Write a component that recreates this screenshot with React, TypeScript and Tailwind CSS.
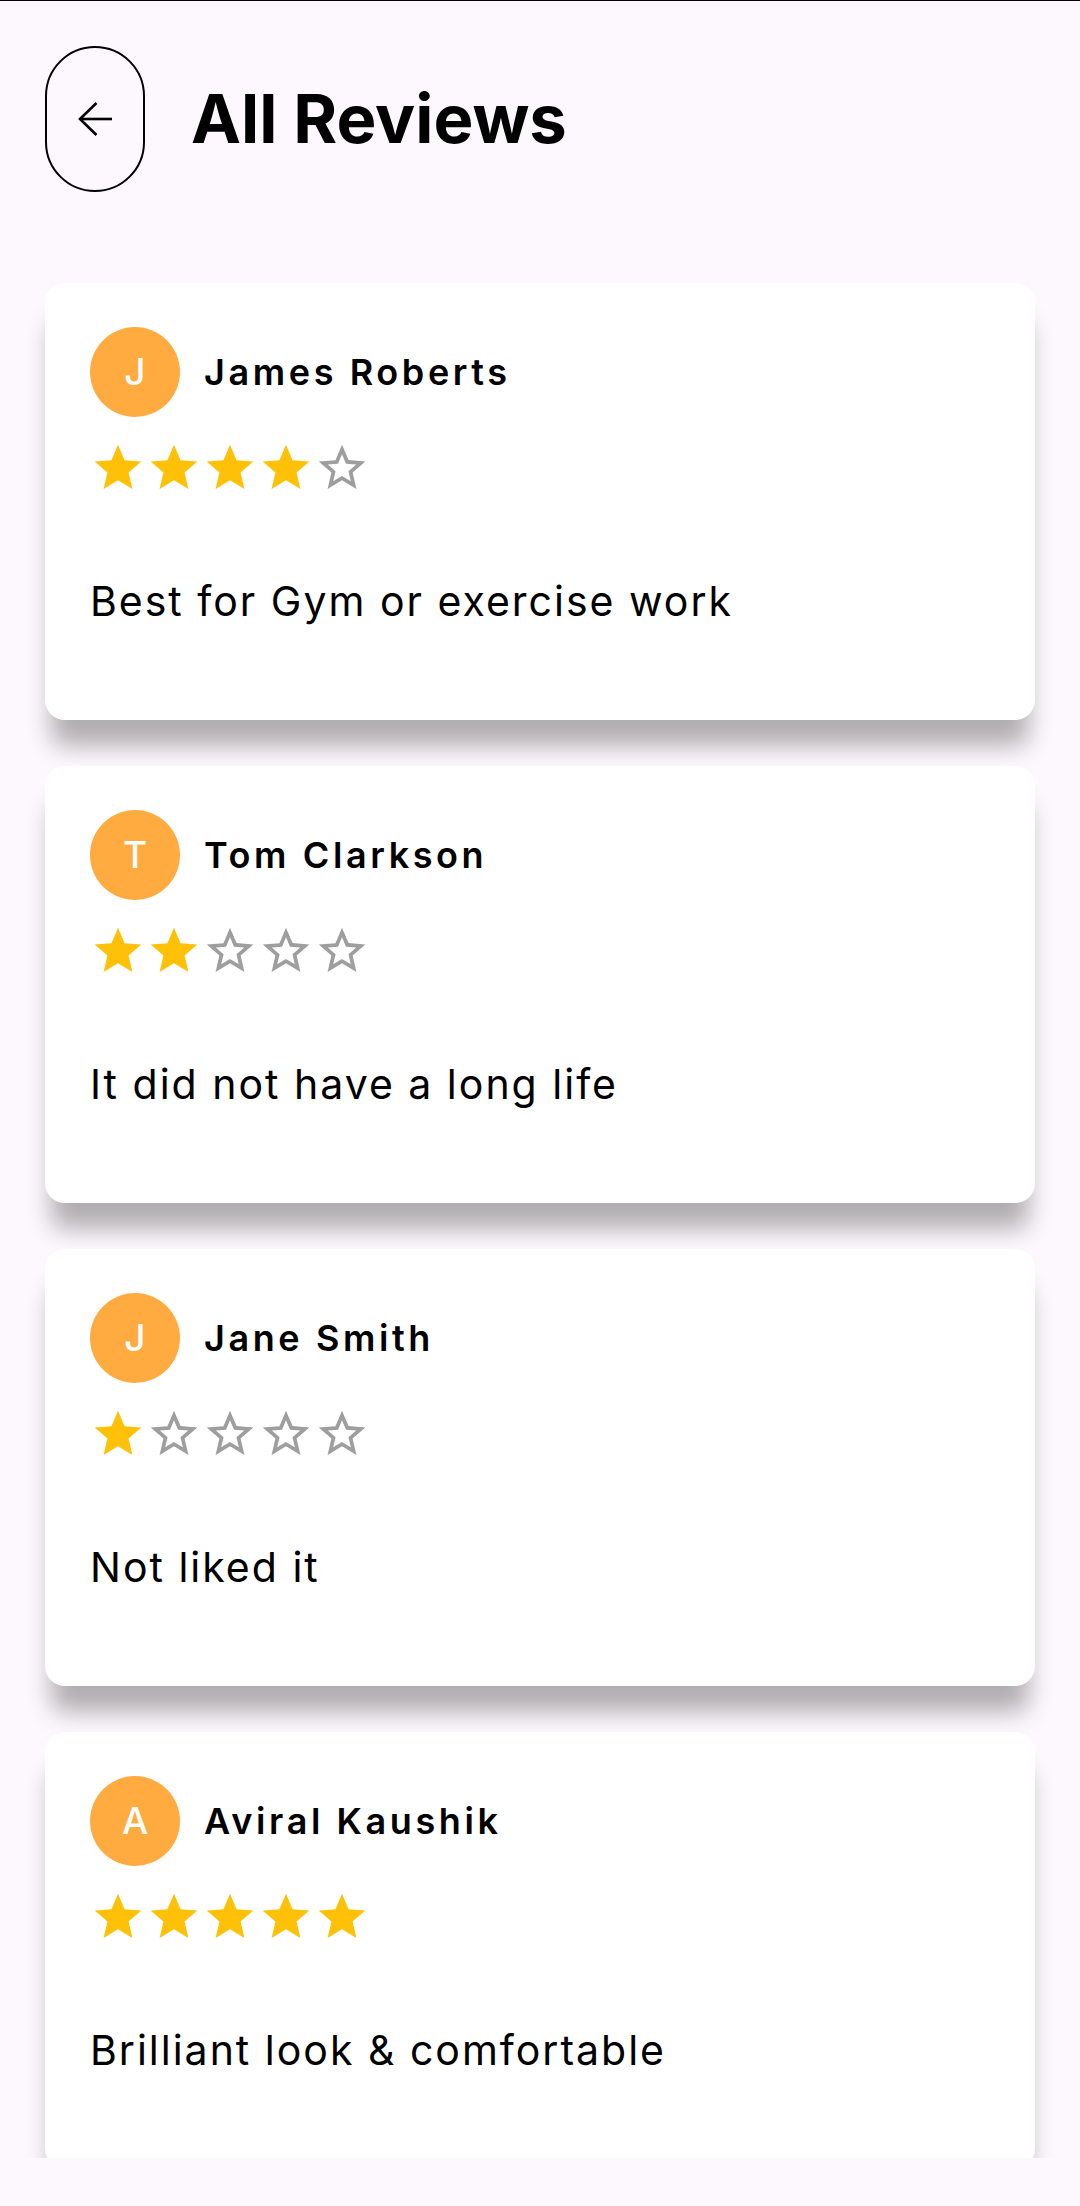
import React from "react";

const reviews = [
  { name: "James Roberts", rating: 4, text: "Best for Gym or exercise work" },
  { name: "Tom Clarkson", rating: 2, text: "It did not have a long life" },
  { name: "Jane Smith", rating: 1, text: "Not liked it" },
  { name: "Aviral Kaushik", rating: 5, text: "Brilliant look & comfortable" },
];

function Star({ filled }: { filled: boolean }) {
  return (
    <svg width="56" height="56" viewBox="0 0 24 24" className="block">
      {filled ? (
        <path fill="#ffc107" d="M12 17.27L18.18 21l-1.64-7.03L22 9.24l-7.19-.61L12 2 9.19 8.63 2 9.24l5.46 4.73L5.82 21z" />
      ) : (
        <path
          fill="#9e9e9e"
          d="M22 9.24l-7.19-.62L12 2 9.19 8.63 2 9.24l5.46 4.73L5.82 21 12 17.27 18.18 21l-1.63-7.03L22 9.24zM12 15.4l-3.76 2.27 1-4.28-3.32-2.88 4.38-.38L12 6.1l1.71 4.04 4.38.38-3.32 2.88 1 4.28L12 15.4z"
        />
      )}
    </svg>
  );
}

function Card({ name, rating, text }: { name: string; rating: number; text: string }) {
  return (
    <div className="shrink-0 h-[437px] rounded-[20px] bg-white px-[45px] pt-[44px] shadow-[0_32px_24px_-6px_rgba(0,0,0,0.3)]">
      <div className="flex items-center gap-[24px]">
        <div className="w-[90px] h-[90px] rounded-full bg-[#ffab40] flex items-center justify-center text-white text-[37px] font-medium font-['Inter',sans-serif]">
          {name[0]}
        </div>
        <div className="font-['Inter',sans-serif] font-semibold text-[36px] tracking-[3.6px] text-black">{name}</div>
      </div>
      <div className="flex mt-[23px]">
        {[0, 1, 2, 3, 4].map((i) => (
          <Star key={i} filled={i < rating} />
        ))}
      </div>
      <div className="mt-[81px] font-['Inter',sans-serif] text-[41px] tracking-[2px] text-black leading-[48px]">{text}</div>
    </div>
  );
}

export default function App() {
  return (
    <div className="w-[1080px] h-[2206px] bg-[#fdf8fd] border-t border-black overflow-hidden flex flex-col">
      <div className="flex items-center gap-[46px] px-[45px] pt-[45px]">
        <div className="w-[100px] h-[146px] rounded-full border-2 border-black flex items-center justify-center">
          <svg width="36" height="36" viewBox="0 0 36 36" fill="none" stroke="black" strokeWidth="2.6" strokeLinecap="butt">
            <path d="M35 18H3" />
            <path d="M19.5 2L3 18l16.5 16" />
          </svg>
        </div>
        <h1 className="font-['Inter',sans-serif] font-bold text-[67px] text-black">All Reviews</h1>
      </div>
      <div className="mt-[91px] h-[1875px] overflow-hidden px-[45px] flex flex-col gap-[46px]">
        {reviews.map((r) => (
          <Card key={r.name} {...r} />
        ))}
      </div>
    </div>
  );
}
